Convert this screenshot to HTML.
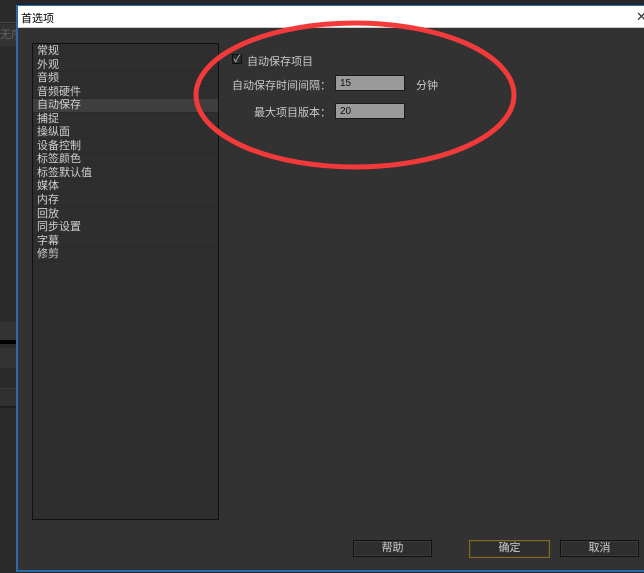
<!DOCTYPE html>
<html><head><meta charset="utf-8"><style>
*{margin:0;padding:0;box-sizing:border-box}
body{width:644px;height:573px;background:#262626;position:relative;overflow:hidden;font-family:"Liberation Sans","Noto Sans CJK SC",sans-serif;font-size:11px;color:#c8c8c8}
.a{position:absolute;white-space:nowrap}
.list div{height:13.55px;line-height:13px;padding-left:4px;border-bottom:1px solid #2a2a2a;color:#cfcfcf;font-size:11px}
.btn{position:absolute;height:17px;background:#2e2e2e;border:1px solid #111;box-shadow:inset 0 0 0 1px #3a3a3a;text-align:center;line-height:15px;color:#ccc;font-size:11px}
.inp{position:absolute;width:70px;height:16px;background:#9a9a9a;border:1px solid #1a1a1a;color:#111;font-size:10px;line-height:15px;padding-left:4px}
</style></head><body>
<div class="a" style="left:0;top:0;width:16px;height:573px;background:#2a2a2a"></div>
<div class="a" style="left:0;top:22px;width:16px;height:1px;background:#444"></div>
<div class="a" style="left:0;top:24px;width:16px;height:22px;background:#333;color:#666;font-size:11px;line-height:22px;overflow:hidden">无序</div>
<div class="a" style="left:0;top:322px;width:16px;height:18px;background:#333"></div>
<div class="a" style="left:0;top:340px;width:16px;height:4px;background:#000"></div>
<div class="a" style="left:0;top:348px;width:16px;height:20px;background:#333"></div>
<div class="a" style="left:0;top:388px;width:16px;height:20px;background:#303030;border-top:1px solid #3a3a3a;border-bottom:2px solid #1e1e1e"></div>
<div class="a" style="left:16px;top:5px;width:628px;height:567px;background:#323232;border-left:2px solid #2b6aa8;border-top:1px solid #2b6aa8;border-bottom:2px solid #2b6aa8"></div>
<div class="a" style="left:18px;top:6px;width:626px;height:22px;background:#fff;border-bottom:1px solid #ccc"></div>
<div class="a" style="left:21px;top:10px;color:#000;font-size:11px">首选项</div>
<div class="a" style="left:636px;top:9px;color:#333;font-size:13px">✕</div>
<div class="a list" style="left:32px;top:43px;width:187px;height:477px;background:#2e2e2e;border:1px solid #111;padding-top:1px">
<div>常规</div><div>外观</div><div>音频</div><div>音频硬件</div><div style="background:#3e3e3e">自动保存</div><div>捕捉</div><div>操纵面</div><div>设备控制</div><div>标签颜色</div><div>标签默认值</div><div>媒体</div><div>内存</div><div>回放</div><div>同步设置</div><div>字幕</div><div>修剪</div>
</div>
<div class="a" style="left:232px;top:54px;width:10px;height:10px;border:1px solid #111;background:#2a2a2a;color:#ccc;font-size:10px;line-height:9px;text-align:center">✓</div>
<div class="a" style="left:247px;top:53px">自动保存项目</div>
<div class="a" style="left:232px;top:77px">自动保存时间间隔：</div>
<div class="inp" style="left:335px;top:75px">15</div>
<div class="a" style="left:416px;top:77px">分钟</div>
<div class="a" style="left:254px;top:104px">最大项目版本：</div>
<div class="inp" style="left:335px;top:103px">20</div>
<svg class="a" style="left:0;top:0" width="644" height="573"><ellipse cx="355" cy="95" rx="159" ry="72" fill="none" stroke="#f23a3a" stroke-width="5"/></svg>
<div class="btn" style="left:353px;top:540px;width:79px">帮助</div>
<div class="btn" style="left:469px;top:540px;width:81px;border-color:#8a6a10;height:18px">确定</div>
<div class="btn" style="left:560px;top:540px;width:79px">取消</div>
</body></html>
